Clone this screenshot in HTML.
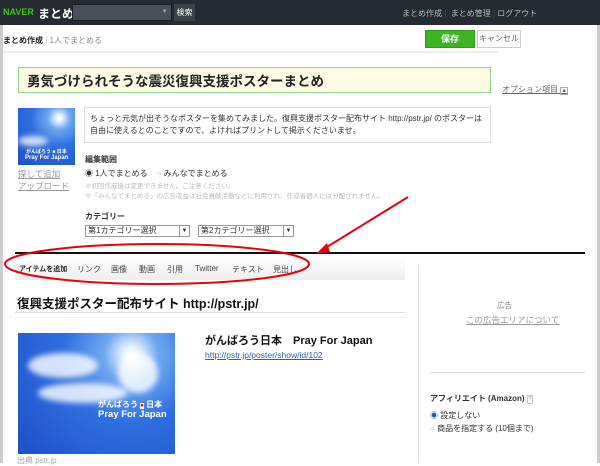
<!DOCTYPE html>
<html><head><meta charset="utf-8"><style>
*{margin:0;padding:0;box-sizing:border-box}
body{width:600px;height:463px;overflow:hidden;background:#fff;font-family:"Liberation Sans","Noto Sans CJK JP",sans-serif;position:relative;color:#333}
.a{position:absolute;white-space:nowrap}
.sky{background:radial-gradient(circle at 72% 18%,#fff 0,#e8f4ff 5%,#6fa8f0 18%,#2f6fe0 45%,#1d4fc9 100%)}
.cl{position:absolute;background:rgba(255,255,255,.8);border-radius:50%;filter:blur(3px)}
.t{position:absolute;top:264px;font-size:8px;color:#444}
</style></head><body>
<div class="a" style="left:0;top:0;width:600px;height:25px;background:#262a33"></div>
<div class="a" style="left:3px;top:7px;font-size:9px;font-weight:bold;color:#3fc21f">NAVER</div>
<div class="a" style="left:38px;top:5px;font-size:12px;font-weight:bold;color:#fff">まとめ</div>
<div class="a" style="left:72px;top:4px;width:100px;height:17px;background:#4a4f59;border:1px solid #1a1d22"></div>
<div class="a" style="left:163px;top:7px;font-size:7px;color:#aaa">▾</div>
<div class="a" style="left:174px;top:4px;width:21px;height:17px;background:#3c414a;color:#fff;font-size:8px;text-align:center;line-height:17px">検索</div>
<div class="a" style="left:402px;top:8px;font-size:8px;color:#bbb">まとめ作成 <span style="color:#555">|</span>&nbsp; まとめ管理 <span style="color:#555">|</span> ログアウト</div>
<div class="a" style="left:0;top:25px;width:3px;height:438px;background:#ccc"></div>
<div class="a" style="left:597px;top:25px;width:3px;height:438px;background:#ccc"></div>
<div class="a" style="left:3px;top:35px;font-size:8px;font-weight:bold;color:#222">まとめ作成 <span style="color:#ccc;font-weight:normal">|</span> <span style="font-weight:normal;color:#888">1人でまとめる</span></div>
<div class="a" style="left:425px;top:30px;width:50px;height:18px;background:#3cb521;border:1px solid #2b9a16;color:#fff;font-size:9px;font-weight:bold;text-align:center;line-height:16px">保存</div>
<div class="a" style="left:477px;top:30px;width:44px;height:18px;background:#fafafa;border:1px solid #ccc;color:#666;font-size:8px;text-align:center;line-height:16px">キャンセル</div>
<div class="a" style="left:3px;top:51px;width:496px;height:2px;background:#eee"></div>
<div class="a" style="left:18px;top:67px;width:473px;height:26px;background:#fdfbe3;border:1px solid #8fd68f;font-size:13.5px;font-weight:bold;color:#222;padding:2px 8px">勇気づけられそうな震災復興支援ポスターまとめ</div>
<div class="a" style="left:502px;top:84px;font-size:8px;color:#666;text-decoration:underline">オプション項目 <span style="border:1px solid #aaa;font-size:6px">▲</span></div>
<div class="a sky" style="left:18px;top:108px;width:57px;height:57px;overflow:hidden"><div class="cl" style="left:0;top:28px;width:30px;height:10px"></div><div class="a" style="left:8px;top:40px;font-size:5px;color:#fff;font-weight:bold">がんばろう ■ 日本</div><div class="a" style="left:7px;top:47px;font-size:6px;color:#fff;font-weight:bold">Pray For Japan</div></div>
<div class="a" style="left:18px;top:168px;font-size:8.5px;color:#999;text-decoration:underline;line-height:12px">探して追加<br>アップロード</div>
<div class="a" style="left:84px;top:107px;width:407px;height:36px;border:1px solid #ddd;font-size:8px;color:#333;padding:5px 5px;line-height:12px;white-space:normal">ちょっと元気が出そうなポスターを集めてみました。復興支援ポスター配布サイト http://pstr.jp/ のポスターは自由に使えるとのことですので、よければプリントして掲示くださいませ。</div>
<div class="a" style="left:85px;top:154px;font-size:8px;font-weight:bold;color:#333">編集範囲</div>
<div class="a" style="left:85px;top:168px;font-size:8px;color:#333">◉ 1人でまとめる &nbsp;&nbsp; <span style="color:#bbb">○</span> みんなでまとめる</div>
<div class="a" style="left:85px;top:182px;font-size:6.5px;color:#bbb;line-height:10px">※初回作成後は変更できません。ご注意ください。<br>※「みんなでまとめる」の広告収益は社会貢献活動などに利用され、作成者個人には分配されません。</div>
<div class="a" style="left:85px;top:211px;font-size:8px;font-weight:bold;color:#333">カテゴリー</div>
<div class="a" style="left:85px;top:225px;width:105px;height:12px;border:1px solid #999;font-size:8px;padding-left:2px;line-height:10px">第1カテゴリー選択<span style="position:absolute;right:0;top:0;width:10px;height:10px;border-left:1px solid #999;font-size:6px;text-align:center">▼</span></div>
<div class="a" style="left:198px;top:225px;width:96px;height:12px;border:1px solid #999;font-size:8px;padding-left:2px;line-height:10px">第2カテゴリー選択<span style="position:absolute;right:0;top:0;width:10px;height:10px;border-left:1px solid #999;font-size:6px;text-align:center">▼</span></div>
<div class="a" style="left:15px;top:252px;width:570px;height:2px;background:#111"></div>
<div class="a" style="left:15px;top:256px;width:390px;height:24px;background:linear-gradient(#fff,#eee)"></div>
<div class="a" style="left:19px;top:264px;font-size:7px;font-weight:bold;color:#222">アイテムを追加</div>
<div class="t" style="left:77px">リンク</div><div class="t" style="left:111px">画像</div><div class="t" style="left:139px">動画</div><div class="t" style="left:167px">引用</div><div class="t" style="left:195px">Twitter</div><div class="t" style="left:232px">テキスト</div><div class="t" style="left:273px">見出し</div>
<svg class="a" style="left:0;top:180px" width="420" height="110"><ellipse cx="157" cy="84" rx="152" ry="20" fill="none" stroke="#e8000f" stroke-width="2"/><line x1="408" y1="17" x2="322" y2="70" stroke="#e8000f" stroke-width="2"/><path d="M316 74 L327 63 L330 72 Z" fill="#e8000f"/></svg>
<div class="a" style="left:418px;top:265px;width:1px;height:198px;background:#ddd"></div>
<div class="a" style="left:17px;top:293px;font-size:12.5px;font-weight:bold;color:#111">復興支援ポスター配布サイト http://pstr.jp/</div>
<div class="a" style="left:15px;top:312px;width:390px;height:1px;background:#ddd"></div>
<div class="a" style="left:15px;top:317px;width:390px;height:1px;background:#eee"></div>
<div class="a sky" style="left:18px;top:333px;width:157px;height:121px;overflow:hidden"><div class="cl" style="left:10px;top:20px;width:70px;height:25px"></div><div class="cl" style="left:20px;top:50px;width:90px;height:20px"></div><div class="cl" style="left:100px;top:20px;width:40px;height:40px"></div><div class="a" style="left:80px;top:66px;font-size:8px;color:#fff;font-weight:bold">がんばろう <span style="background:#fff;color:#d00;font-size:6px">●</span> 日本</div><div class="a" style="left:80px;top:76px;font-size:9.5px;color:#fff;font-weight:bold">Pray For Japan</div></div>
<div class="a" style="left:205px;top:332px;font-size:11px;font-weight:bold;color:#111">がんばろう日本　Pray For Japan</div>
<div class="a" style="left:205px;top:350px;font-size:8.5px;color:#2a5db0;text-decoration:underline">http://pstr.jp/poster/show/id/102</div>
<div class="a" style="left:17px;top:455px;font-size:8px;color:#aaa">出典 pstr.jp</div>
<div class="a" style="left:497px;top:300px;font-size:7.5px;color:#888">広告</div>
<div class="a" style="left:466px;top:314px;font-size:8.5px;color:#999;text-decoration:underline">この広告エリアについて</div>
<div class="a" style="left:430px;top:372px;width:155px;height:1px;background:#ddd"></div>
<div class="a" style="left:430px;top:393px;font-size:8px;font-weight:bold;color:#333">アフィリエイト (Amazon) <span style="border:1px solid #ccc;color:#aaa;font-weight:normal;font-size:7px">?</span></div>
<div class="a" style="left:430px;top:410px;font-size:8px;color:#333"><span style="color:#2a5db0">◉</span> 設定しない</div>
<div class="a" style="left:430px;top:423px;font-size:8px;color:#333"><span style="color:#bbb">○</span> 商品を指定する (10個まで)</div>
</body></html>
